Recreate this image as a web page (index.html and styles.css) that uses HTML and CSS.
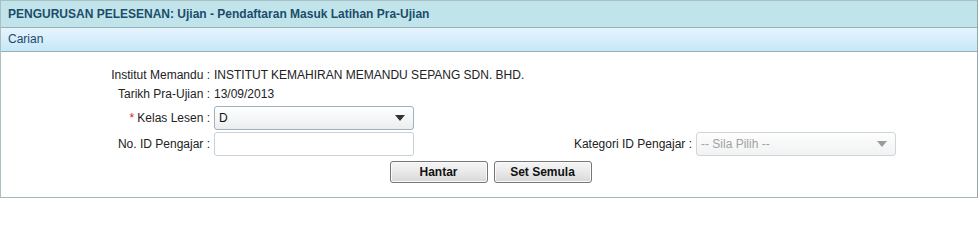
FILE: index.html
```html
<!DOCTYPE html>
<html>
<head>
<meta charset="utf-8">
<link rel="stylesheet" href="styles.css">
</head>
<body>
<div class="panel">
  <div class="title">PENGURUSAN PELESENAN: Ujian - Pendaftaran Masuk Latihan Pra-Ujian</div>
  <div class="subbar">Carian</div>
  <div class="content">
    <div class="grid">
      <div class="lbl">Institut Memandu :</div>
      <div class="val span3">INSTITUT KEMAHIRAN MEMANDU SEPANG SDN. BHD.</div>

      <div class="lbl">Tarikh Pra-Ujian :</div>
      <div class="val span3">13/09/2013</div>

      <div class="lbl row-field"><span class="req">*</span> Kelas Lesen :</div>
      <div class="val span3 row-field">
        <div class="select"><span>D</span>
          <svg class="arrow" width="10" height="6" viewBox="0 0 10 6"><path d="M0 0H10L5 6Z" fill="#333"/></svg>
        </div>
      </div>

      <div class="lbl row-field">No. ID Pengajar :</div>
      <div class="val row-field"><div class="input"></div></div>
      <div class="lbl row-field">Kategori ID Pengajar :</div>
      <div class="val row-field">
        <div class="select disabled"><span>-- Sila Pilih --</span>
          <svg class="arrow" width="10" height="6" viewBox="0 0 10 6"><path d="M0 0H10L5 6Z" fill="#9a9a9a"/></svg>
        </div>
      </div>
    </div>
    <div class="actions">
      <button class="btn">Hantar</button>
      <button class="btn">Set Semula</button>
    </div>
  </div>
</div>
</body>
</html>
```
FILE: styles.css
```css
html, body {
  margin: 0;
  padding: 0;
  background: #fff;
}
body {
  font-family: "Liberation Sans", Arial, sans-serif;
  font-size: 12px;
  color: #222;
}
.panel {
  width: 976px;
  border: 1px solid #a9bfc4;
  border-right-color: #8fa7ad;
  border-bottom-color: #a3b9be;
  height: 196px;
  box-sizing: content-box;
}
.title {
  height: 26px;
  line-height: 26px;
  background: #c1e4ea;
  border-bottom: 1px solid #93b1b8;
  padding-left: 7px;
  font-weight: bold;
  color: #1b4d6a;
}
.subbar {
  height: 23px;
  line-height: 23px;
  background: linear-gradient(#e6f5fd, #c7e7f8);
  border-bottom: 1px solid #93b1b8;
  padding-left: 7px;
  color: #1d476c;
}
.content {
  padding-top: 14px;
}
.grid {
  display: grid;
  grid-template-columns: 213px 355px 127px 200px;
  grid-template-rows: 19px 19px 24px 24px;
  row-gap: 0;
}
.lbl {
  text-align: right;
  padding-right: 4px;
  line-height: 19px;
  white-space: nowrap;
  color: #222;
}
.val {
  line-height: 19px;
  white-space: nowrap;
  color: #222;
}
.span3 {
  grid-column: span 3;
}
.row-field {
  line-height: 24px;
  display: flex;
  align-items: center;
  justify-content: flex-end;
}
.val.row-field {
  justify-content: flex-start;
}
.grid > :nth-child(5), .grid > :nth-child(6) {
  margin-top: 4px;
}
.grid > :nth-child(n+7) {
  margin-top: 8px;
}
.req {
  color: #e0221c;
  margin-right: 3px;
}
.select {
  width: 200px;
  height: 24px;
  box-sizing: border-box;
  border: 1px solid #9fb2bf;
  border-radius: 3px;
  background: linear-gradient(#ffffff, #ebeef0);
  display: flex;
  align-items: center;
  justify-content: space-between;
  padding: 0 8px 0 4px;
  color: #111;
}
.select.disabled {
  border-color: #cfd5d9;
  background: linear-gradient(#fdfdfd, #f1f2f3);
  color: #a2a2a2;
}
.input {
  width: 200px;
  height: 24px;
  box-sizing: border-box;
  border: 1px solid #c7d1d8;
  border-radius: 3px;
  background: #fff;
}
.actions {
  display: flex;
  justify-content: center;
  gap: 6px;
  margin-top: 9px;
  padding-left: 3px;
}
.btn {
  width: 98px;
  height: 22px;
  border: 1px solid #767676;
  border-radius: 3px;
  background: linear-gradient(#f6f6f6 0%, #e9e9e9 50%, #d8d8d8 100%);
  font-family: "Liberation Sans", Arial, sans-serif;
  font-size: 12px;
  font-weight: bold;
  color: #111;
  padding: 0;
  box-shadow: inset 0 0 0 1px #fafafa;
}
```
